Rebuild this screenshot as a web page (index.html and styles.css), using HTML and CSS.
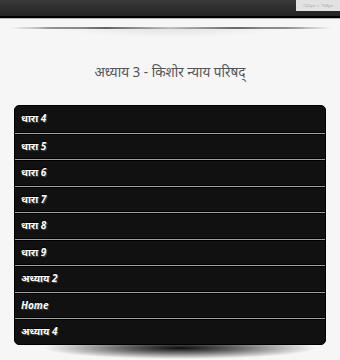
FILE: index.html
```html
<!DOCTYPE html>
<html lang="hi">
<head>
<meta charset="utf-8">
<title>अध्याय 3 - किशोर न्याय परिषद्</title>
<link rel="stylesheet" href="styles.css">
</head>
<body>
<header class="topbar">
  <span class="size-badge">743px × 768px</span>
</header>
<div class="top-shadow"></div>
<main class="page">
  <h1 class="title">अध्याय 3 - किशोर न्याय परिषद्</h1>
  <div class="list-wrap">
    <ul class="list">
      <li class="item"><a href="#">धारा 4</a></li>
      <li class="item"><a href="#">धारा 5</a></li>
      <li class="item"><a href="#">धारा 6</a></li>
      <li class="item"><a href="#">धारा 7</a></li>
      <li class="item"><a href="#">धारा 8</a></li>
      <li class="item"><a href="#">धारा 9</a></li>
      <li class="item"><a href="#">अध्याय 2</a></li>
      <li class="item"><a href="#">Home</a></li>
      <li class="item"><a href="#">अध्याय 4</a></li>
    </ul>
    <div class="bottom-shadow"></div>
  </div>
</main>
</body>
</html>
```
FILE: styles.css
```css
html, body {
  margin: 0;
  padding: 0;
}
body {
  background: #f6f6f6;
  font-family: "Noto Sans", "Noto Sans Devanagari", "Liberation Sans", sans-serif;
}
.topbar {
  position: relative;
  height: 16px;
  background: linear-gradient(#3a3a3a, #232323);
  border-bottom: 2px solid #000;
  box-shadow: 0 1px 0 #b5b5b5;
}
.size-badge {
  position: absolute;
  top: 0;
  right: 0;
  width: 44px;
  height: 11px;
  background: #e2e2e2;
  color: #a8a8a8;
  font-family: "Liberation Serif", serif;
  font-size: 5px;
  line-height: 11px;
  text-align: center;
  white-space: nowrap;
  overflow: hidden;
}
.top-shadow {
  position: relative;
  margin: 9px 7px 0;
  height: 2px;
  background: linear-gradient(90deg, rgba(0,0,0,0) 0%, rgba(0,0,0,0.55) 12%, rgba(0,0,0,0.6) 30%, rgba(0,0,0,0.2) 50%, rgba(0,0,0,0.6) 72%, rgba(0,0,0,0.55) 90%, rgba(0,0,0,0) 100%);
  border-radius: 50%;
}
.top-shadow::after {
  content: "";
  position: absolute;
  left: 15%;
  right: 15%;
  top: 1px;
  height: 10px;
  background: radial-gradient(ellipse at 50% 0%, rgba(0,0,0,0.08), rgba(0,0,0,0) 70%);
}
.page {
  padding: 0 14px;
}
.title {
  margin: 33px 0 0;
  height: 20px;
  font-size: 13.5px;
  font-weight: normal;
  line-height: 20px;
  color: #555;
  text-align: center;
}
.list-wrap {
  margin-top: 23px;
}
.list {
  position: relative;
  z-index: 1;
  list-style: none;
  margin: 0;
  padding: 0;
  border: 1px solid #000;
  border-radius: 5px;
  overflow: hidden;
  background: #111;
}
.item {
  height: 24.5px;
  border-top: 1px solid #a0a0a0;
  border-bottom: 1px solid #000;
  box-shadow: inset 0 1px 0 #000;
  background: #111;
}
.item:first-child {
  border-top: none;
  box-shadow: none;
  height: 25.5px;
}
.item:last-child {
  border-bottom: none;
  height: 24.5px;
}
.item a {
  display: block;
  padding-left: 6px;
  height: 100%;
  line-height: 25px;
  color: #fff;
  font-size: 10px;
  font-weight: bold;
  font-style: italic;
  text-decoration: none;
  text-shadow: 0 -1px 1px #000, 1px 1px 1px #555;
}
.bottom-shadow {
  margin: -8px 10px 0 30px;
  height: 22px;
  background: radial-gradient(closest-side, rgba(0,0,0,0.95), rgba(0,0,0,0.6) 40%, rgba(0,0,0,0) 100%);
}
```
